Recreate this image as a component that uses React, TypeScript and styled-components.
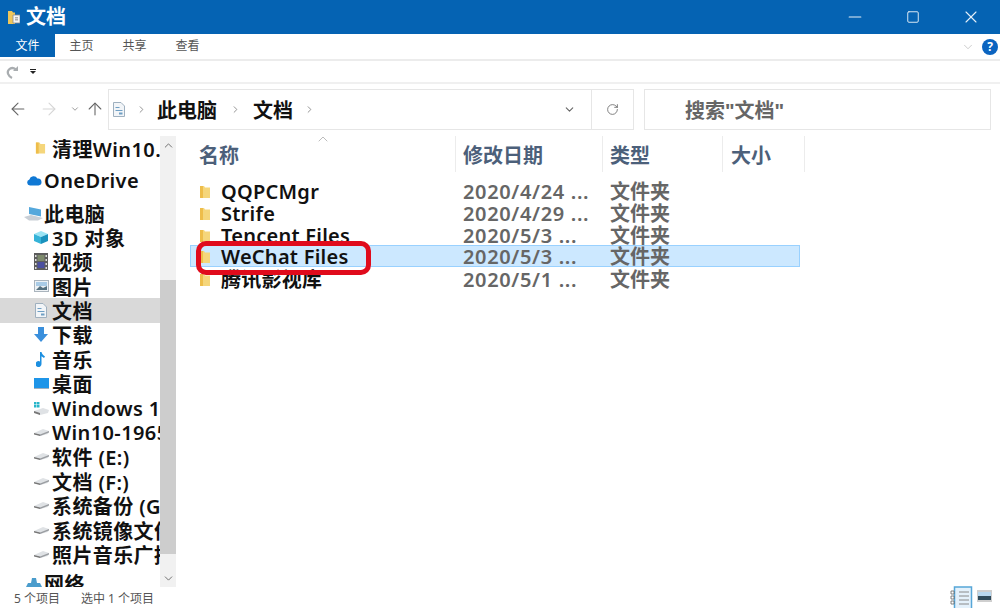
import styled, { createGlobalStyle } from 'styled-components';
import { ArrowLeft, ArrowRight, ArrowUp, ChevronDown, ChevronRight, ChevronUp, Minus, RotateCw, Square, X } from 'lucide-react';

const GlobalStyle = createGlobalStyle`
  html, body { margin: 0; padding: 0; background: #fff; }
  * { box-sizing: border-box; }
`;

const Window = styled.div`
  position: relative;
  display: flex;
  flex-direction: column;
  width: 1000px;
  height: 608px;
  overflow: hidden;
  background: #fff;
  font-family: "Noto Sans", "Noto Sans CJK SC", sans-serif;
`;

const TitleBar = styled.div`
  display: flex;
  align-items: center;
  height: 34px;
  flex: none;
  padding-left: 8px;
  background: #0563b3;
  color: #fff;
`;

const TitleText = styled.div`
  margin-left: 6px;
  font-size: 20px;
  font-weight: 700;
  line-height: 34px;
`;

const WindowControls = styled.div`
  display: flex;
  margin-left: auto;
`;

const WindowButton = styled.div`
  display: flex;
  align-items: center;
  justify-content: center;
  width: 58px;
  color: #e6f0f8;
`;

const TabBar = styled.div`
  display: flex;
  height: 27px;
  flex: none;
  border-bottom: 2px solid #ececec;
`;

const Tab = styled.div<{ $active?: boolean }>`
  width: ${p => (p.$active ? 55 : 53)}px;
  height: ${p => (p.$active ? 23 : 25)}px;
  font-size: 12px;
  line-height: 23px;
  text-align: center;
  background: ${p => (p.$active ? '#0563b3' : 'transparent')};
  color: ${p => (p.$active ? '#fff' : '#555')};
`;

const RibbonEnd = styled.div`
  display: flex;
  align-items: center;
  gap: 7px;
  margin-left: auto;
  padding-right: 2px;
  color: #b9b9b9;
`;

const HelpBadge = styled.div`
  width: 16px;
  height: 16px;
  border-radius: 50%;
  background: #0b64c0;
  color: #fff;
  font-size: 12px;
  font-weight: 700;
  line-height: 16px;
  text-align: center;
`;

const QuickBar = styled.div`
  display: flex;
  align-items: center;
  gap: 11px;
  height: 23px;
  flex: none;
  padding-left: 5px;
  border-bottom: 2px solid #f0f0f0;
`;

const DropMark = styled.div`
  width: 6px;
  height: 6px;
  border-top: 1px solid #222;
  &::after {
    content: '';
    display: block;
    margin-top: 1px;
    border-left: 3px solid transparent;
    border-right: 3px solid transparent;
    border-top: 3px solid #222;
  }
`;

const AddressRow = styled.div`
  display: flex;
  align-items: center;
  height: 46px;
  flex: none;
  padding: 4px 9px 0 0;
`;

const NavButtons = styled.div`
  display: flex;
  align-items: center;
  width: 108px;
  flex: none;
  padding-left: 8px;
`;

const NavSlot = styled.div<{ $w: number; $color: string }>`
  display: flex;
  justify-content: center;
  width: ${p => p.$w}px;
  flex: none;
  color: ${p => p.$color};
`;

const FieldBox = styled.div`
  display: flex;
  align-items: center;
  height: 41px;
  border: 1px solid #e6e6e6;
`;

const AddressBox = styled(FieldBox)`
  width: 526px;
  padding-left: 4px;
`;

const Crumb = styled.span`
  font-size: 20px;
  font-weight: 700;
  color: #111;
`;

const CrumbSep = styled.div<{ $w: number }>`
  display: flex;
  justify-content: center;
  width: ${p => p.$w}px;
  color: #8a8a8a;
`;

const AddressTools = styled.div`
  display: flex;
  align-items: center;
  height: 100%;
  margin-left: auto;
`;

const ToolCell = styled.div<{ $w: number; $line?: boolean }>`
  display: flex;
  align-items: center;
  justify-content: center;
  width: ${p => p.$w}px;
  height: 100%;
  color: #666;
  border-left: ${p => (p.$line ? '1px solid #e6e6e6' : 'none')};
`;

const SearchBox = styled(FieldBox)`
  width: 347px;
  margin-left: 10px;
  padding-left: 40px;
  font-size: 20px;
  font-weight: 700;
  color: #666;
`;

const Main = styled.div`
  display: flex;
  flex: 1;
  min-height: 0;
`;

const Sidebar = styled.div`
  width: 160px;
  flex: none;
  padding-top: 6px;
  overflow: hidden;
`;

const TreeRow = styled.div<{ $indent: number; $gap?: number; $active?: boolean }>`
  display: flex;
  align-items: center;
  height: 24.4px;
  margin-top: ${p => p.$gap ?? 0}px;
  padding-left: ${p => p.$indent}px;
  background: ${p => (p.$active ? '#d9d9d9' : 'transparent')};
  font-size: 20px;
  font-weight: 600;
  letter-spacing: 0.4px;
  color: #111;
  white-space: nowrap;
`;

const TreeIcon = styled.div<{ $w: number }>`
  display: flex;
  justify-content: center;
  width: ${p => p.$w}px;
  flex: none;
`;

const ScrollBar = styled.div`
  display: flex;
  flex-direction: column;
  width: 16px;
  flex: none;
  margin-top: 6px;
  background: #f1f1f1;
`;

const ScrollCap = styled.div`
  display: flex;
  align-items: center;
  justify-content: center;
  height: 18px;
  flex: none;
  color: #555;
`;

const ScrollGap = styled.div<{ $h: number }>`
  height: ${p => p.$h}px;
  flex: none;
`;

const ScrollThumb = styled.div`
  flex: 1;
  background: #cdcdcd;
`;

const FilePane = styled.div`
  position: relative;
  flex: 1;
  padding: 6px 0 0 14px;
`;

const SortMark = styled.div`
  position: absolute;
  left: 139px;
  top: 0;
  color: #9a9a9a;
`;

const ColumnGrid = styled.div`
  display: grid;
  grid-template-columns: 266px 147px 120px 82px;
`;

const HeaderCell = styled.div`
  height: 36px;
  padding-left: 7px;
  border-right: 1px solid #ececec;
  font-size: 20px;
  font-weight: 700;
  line-height: 40px;
  color: #4c607a;
  white-space: nowrap;

  &:first-child {
    padding-left: 9px;
  }
  &:last-child {
    padding-left: 8px;
  }
`;

const FileList = styled.div`
  margin-top: 8px;
  width: 610px;
`;

const FileRow = styled.div<{ $selected?: boolean }>`
  display: grid;
  grid-template-columns: 265px 147px 198px;
  height: 22px;
  margin-top: ${p => (p.$selected ? -1 : 0)}px;
  margin-bottom: ${p => (p.$selected ? 1 : 0)}px;
  padding-top: 1px;
  background: ${p => (p.$selected ? '#cce8ff' : 'transparent')};
  box-shadow: ${p => (p.$selected ? 'inset 0 0 0 1px #99d1ff' : 'none')};
  font-size: 20px;
  font-weight: 600;
  line-height: 22px;
`;

const NameCell = styled.div`
  display: flex;
  align-items: center;
  padding-left: 9px;
  color: #111;
  letter-spacing: 0.25px;
  white-space: nowrap;
`;

const NameText = styled.span`
  margin-left: 10px;
`;

const InfoCell = styled.div<{ $wide?: boolean }>`
  padding-left: 8px;
  color: #666;
  letter-spacing: ${p => (p.$wide ? 0.65 : 0)}px;
  white-space: nowrap;
`;

const Callout = styled.div`
  position: absolute;
  left: 20px;
  top: 111px;
  width: 175px;
  height: 34px;
  border: 5px solid #e00b1c;
  border-radius: 10px;
`;

const StatusBar = styled.div`
  display: flex;
  align-items: center;
  height: 21px;
  flex: none;
  padding-left: 14px;
  background: #fff;
  font-size: 12px;
  color: #555;
`;

const StatusGap = styled.div`
  width: 21px;
`;

const ViewIcons = styled.div`
  display: flex;
  align-items: flex-end;
  gap: 4px;
  height: 100%;
  margin-left: auto;
  padding-right: 8px;
`;

const FolderIcon = ({ w = 12, h = 14 }: { w?: number; h?: number }) => (
  <svg width={w} height={h} viewBox="0 0 12 14">
    <path d="M1 1h4l1 1.500h5V13H1z" fill="#f5d67b" />
    <path d="M1 1h3v12H1z" fill="#eebd4a" />
  </svg>
);

const DocIcon = () => (
  <svg width="12" height="15" viewBox="0 0 12 15">
    <path d="M.5.5h7.500l3.500 3.500v10.500H.5z" fill="#f2f5f8" stroke="#9fb0bf" />
    <path d="M2.500 5h4v1h-4zM2.500 8h7v1h-7zM6 10.500h3.500v2H6z" fill="#6f9fc4" />
  </svg>
);

const CloudIcon = () => (
  <svg width="16" height="11" viewBox="0 0 16 11">
    <path d="M4 10.500a3 3 0 0 1-.6-5.900 4.300 4.300 0 0 1 8-1.100A3.500 3.500 0 0 1 12.500 10.500z" fill="#0f78d4" />
  </svg>
);

const PcIcon = () => (
  <svg width="20" height="15" viewBox="0 0 20 15">
    <path d="M5 1l12 2.500v7L5 8z" fill="#55a8dc" />
    <path d="M0 11l7-2 12 3-5 2.500H5z" fill="#c9cfd6" />
  </svg>
);

const CubeIcon = () => (
  <svg width="16" height="15" viewBox="0 0 16 15">
    <path d="M1 4l7-3 7 3-7 3z" fill="#9be4f4" />
    <path d="M1 4l7 3v7l-7-3z" fill="#35b3d8" />
    <path d="M15 4l-7 3v7l7-3z" fill="#1a92bd" />
  </svg>
);

const FilmIcon = () => (
  <svg width="14" height="17" viewBox="0 0 14 17">
    <rect width="14" height="17" fill="#5c5c5c" />
    <rect x="3.500" y="2" width="7" height="6" fill="#7d8a6c" />
    <rect x="3.500" y="9" width="7" height="6" fill="#4a4fa0" />
    <path d="M1 2h1.500v2H1zM1 6h1.500v2H1zM1 10h1.500v2H1zM1 14h1.500v2H1zM11.500 2H13v2h-1.500zM11.500 6H13v2h-1.500zM11.500 10H13v2h-1.500zM11.500 14H13v2h-1.500z" fill="#ddd" />
  </svg>
);

const PictureIcon = () => (
  <svg width="15" height="12" viewBox="0 0 15 12">
    <rect x=".5" y=".5" width="14" height="11" fill="#eef2f5" stroke="#aab4bd" />
    <rect x="2" y="2" width="11" height="4" fill="#a9cbe6" />
    <path d="M2 10l4-4 3 2 4-2v4z" fill="#55707f" />
  </svg>
);

const DownloadIcon = () => (
  <svg width="14" height="15" viewBox="0 0 14 15">
    <path d="M4 0h6v7h4l-7 8-7-8h4z" fill="#3a8fdc" />
  </svg>
);

const NoteIcon = () => (
  <svg width="10" height="15" viewBox="0 0 10 15">
    <path d="M4 0h1.500c.3 2 1.800 3 3.500 4.500L8 6 5.500 4.200V12a3 3 0 1 1-1.500-2.500z" fill="#1c8fe0" />
  </svg>
);

const DesktopIcon = () => (
  <svg width="15" height="11" viewBox="0 0 15 11">
    <rect width="15" height="10" fill="#1e95e8" />
    <rect y="10" width="15" height="1" fill="#9fb0bf" />
  </svg>
);

const DriveIcon = () => (
  <svg width="15" height="7" viewBox="0 0 15 7">
    <path d="M0 4l9-4 6 2-1 3-8 2z" fill="#dfe2e5" />
    <path d="M0 4l6 1.500V7L0 5.500z" fill="#777" />
    <path d="M6 5.500L15 2v1.500L6 7z" fill="#9a9da1" />
  </svg>
);

const WinDriveIcon = () => (
  <svg width="16" height="13" viewBox="0 0 16 13">
    <path d="M1 0h2.500v2.500H1zM4 0h2.500v2.500H4zM1 3h2.500v2.500H1zM4 3h2.500v2.500H4z" fill="#28b5c9" />
    <path d="M1 9l9-3 6 2-1 3-8 2z" fill="#dfe2e5" />
    <path d="M1 9l6 2v2l-6-2z" fill="#777" />
  </svg>
);

const NetworkIcon = () => (
  <svg width="16" height="12" viewBox="0 0 16 12">
    <path d="M6 0h4l1 5h3l2 4H0l2-4h3z" fill="#4a9ccc" />
  </svg>
);

const UndoIcon = () => (
  <svg width="14" height="14" viewBox="0 0 14 14" fill="none">
    <path d="M7 13C3 11 1.500 7 4 4.500c2-2 5-1.500 7 0" stroke="#a9adb0" strokeWidth="2.200" />
    <path d="M13 1v5H8z" fill="#a9adb0" />
  </svg>
);

const FolderDocIcon = () => (
  <svg width="12" height="15" viewBox="0 0 12 15">
    <path d="M0 1h4l1 1.500h2V14H0z" fill="#eec65a" />
    <path d="M5 5h7v8H5z" fill="#f5f5f5" stroke="#8a8a8a" strokeWidth=".8" />
    <path d="M7 7.500h3v.8H7zM7 9.500h3v.8H7z" fill="#666" />
  </svg>
);

const DetailsViewIcon = () => (
  <svg width="23" height="22" viewBox="0 0 23 22" fill="none">
    <path d="M4.500 22V1h17v21" fill="#e4f1fb" stroke="#56a6d8" strokeWidth="1.500" />
    <path d="M9 6h10M9 10h10M9 14h10M9 18h10" stroke="#8a8a8a" />
    <path d="M1 5h3v3H1zM1 10h3v3H1zM1 15h3v3H1z" fill="#fff" stroke="#666" strokeWidth=".8" />
  </svg>
);

const PreviewViewIcon = () => (
  <svg width="15" height="12" viewBox="0 0 15 12" style={{ marginBottom: 6 }}>
    <rect width="15" height="12" fill="#cfcfcf" />
    <rect x="1" y="2" width="13" height="4" fill="#b8d7ee" />
    <rect x="1" y="6" width="13" height="4" fill="#2f4a5a" />
  </svg>
);

type TreeItem = { label: string; icon: JSX.Element; indent: number; iconW: number; gap?: number; active?: boolean };

const TREE: TreeItem[] = [
  { label: '清理Win10...', icon: <FolderIcon w={11} h={16} />, indent: 28, iconW: 24 },
  { label: 'OneDrive', icon: <CloudIcon />, indent: 23, iconW: 21, gap: 8 },
  { label: '此电脑', icon: <PcIcon />, indent: 24, iconW: 20, gap: 9 },
  { label: '3D 对象', icon: <CubeIcon />, indent: 30, iconW: 22, gap: -1 },
  { label: '视频', icon: <FilmIcon />, indent: 30, iconW: 22 },
  { label: '图片', icon: <PictureIcon />, indent: 30, iconW: 22 },
  { label: '文档', icon: <DocIcon />, indent: 30, iconW: 22, active: true },
  { label: '下载', icon: <DownloadIcon />, indent: 30, iconW: 22 },
  { label: '音乐', icon: <NoteIcon />, indent: 30, iconW: 22 },
  { label: '桌面', icon: <DesktopIcon />, indent: 30, iconW: 22 },
  { label: 'Windows 10', icon: <WinDriveIcon />, indent: 30, iconW: 22 },
  { label: 'Win10-1965', icon: <DriveIcon />, indent: 30, iconW: 22 },
  { label: '软件 (E:)', icon: <DriveIcon />, indent: 30, iconW: 22 },
  { label: '文档 (F:)', icon: <DriveIcon />, indent: 30, iconW: 22 },
  { label: '系统备份 (G:)', icon: <DriveIcon />, indent: 30, iconW: 22 },
  { label: '系统镜像文件', icon: <DriveIcon />, indent: 30, iconW: 22 },
  { label: '照片音乐广播', icon: <DriveIcon />, indent: 30, iconW: 22 },
  { label: '网络', icon: <NetworkIcon />, indent: 23, iconW: 21, gap: 5 },
];

const FILES = [
  { name: 'QQPCMgr', date: '2020/4/24 ...' },
  { name: 'Strife', date: '2020/4/29 ...' },
  { name: 'Tencent Files', date: '2020/5/3 ...' },
  { name: 'WeChat Files', date: '2020/5/3 ...', selected: true },
  { name: '腾讯影视库', date: '2020/5/1 ...' },
];

export default function App() {
  return (
    <Window>
      <GlobalStyle />
      <TitleBar>
        <FolderDocIcon />
        <TitleText>文档</TitleText>
        <WindowControls>
          <WindowButton><Minus size={20} strokeWidth={1.3} /></WindowButton>
          <WindowButton><Square size={14} strokeWidth={1.6} /></WindowButton>
          <WindowButton><X size={20} strokeWidth={1.3} /></WindowButton>
        </WindowControls>
      </TitleBar>

      <TabBar>
        <Tab $active>文件</Tab>
        <Tab>主页</Tab>
        <Tab>共享</Tab>
        <Tab>查看</Tab>
        <RibbonEnd>
          <ChevronDown size={14} strokeWidth={1.2} />
          <HelpBadge>?</HelpBadge>
        </RibbonEnd>
      </TabBar>

      <QuickBar>
        <UndoIcon />
        <DropMark />
      </QuickBar>

      <AddressRow>
        <NavButtons>
          <NavSlot $w={20} $color="#666"><ArrowLeft size={20} strokeWidth={1.3} /></NavSlot>
          <NavSlot $w={42} $color="#d6d6d6"><ArrowRight size={20} strokeWidth={1.3} /></NavSlot>
          <NavSlot $w={10} $color="#888"><ChevronDown size={10} strokeWidth={2} /></NavSlot>
          <NavSlot $w={30} $color="#666"><ArrowUp size={20} strokeWidth={1.3} /></NavSlot>
        </NavButtons>
        <AddressBox>
          <DocIcon />
          <CrumbSep $w={32}><ChevronRight size={11} strokeWidth={2} /></CrumbSep>
          <Crumb>此电脑</Crumb>
          <CrumbSep $w={36}><ChevronRight size={11} strokeWidth={2} /></CrumbSep>
          <Crumb>文档</Crumb>
          <CrumbSep $w={32}><ChevronRight size={11} strokeWidth={2} /></CrumbSep>
          <AddressTools>
            <ToolCell $w={44}><ChevronDown size={13} strokeWidth={2} /></ToolCell>
            <ToolCell $w={42} $line><RotateCw size={13} strokeWidth={1.5} /></ToolCell>
          </AddressTools>
        </AddressBox>
        <SearchBox>搜索"文档"</SearchBox>
      </AddressRow>

      <Main>
        <Sidebar>
          {TREE.map(item => (
            <TreeRow key={item.label} $indent={item.indent} $gap={item.gap} $active={item.active}>
              <TreeIcon $w={item.iconW}>{item.icon}</TreeIcon>
              {item.label}
            </TreeRow>
          ))}
        </Sidebar>

        <ScrollBar>
          <ScrollCap><ChevronUp size={13} strokeWidth={1.5} /></ScrollCap>
          <ScrollGap $h={126} />
          <ScrollThumb />
          <ScrollGap $h={15} />
          <ScrollCap><ChevronDown size={13} strokeWidth={1.5} /></ScrollCap>
        </ScrollBar>

        <FilePane>
          <SortMark><ChevronUp size={16} strokeWidth={1} /></SortMark>
          <ColumnGrid>
            <HeaderCell>名称</HeaderCell>
            <HeaderCell>修改日期</HeaderCell>
            <HeaderCell>类型</HeaderCell>
            <HeaderCell>大小</HeaderCell>
          </ColumnGrid>
          <FileList>
            {FILES.map(file => (
              <FileRow key={file.name} $selected={file.selected}>
                <NameCell>
                  <FolderIcon />
                  <NameText>{file.name}</NameText>
                </NameCell>
                <InfoCell $wide>{file.date}</InfoCell>
                <InfoCell>文件夹</InfoCell>
              </FileRow>
            ))}
          </FileList>
          <Callout />
        </FilePane>
      </Main>

      <StatusBar>
        5 个项目
        <StatusGap />
        选中 1 个项目
        <ViewIcons>
          <DetailsViewIcon />
          <PreviewViewIcon />
        </ViewIcons>
      </StatusBar>
    </Window>
  );
}
